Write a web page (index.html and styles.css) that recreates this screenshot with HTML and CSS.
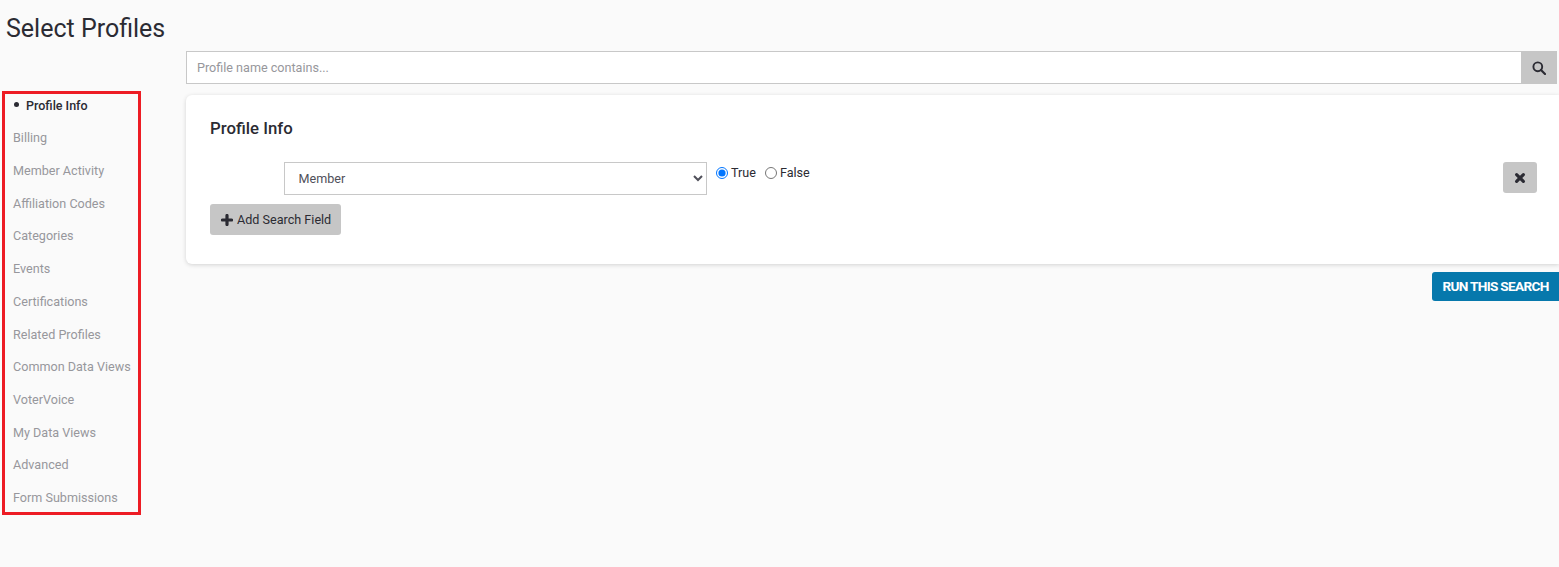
FILE: index.html
```html
<!DOCTYPE html>
<html lang="en">
<head>
<meta charset="utf-8">
<title>Select Profiles</title>
<link rel="stylesheet" href="styles.css">
</head>
<body>
<h1 class="page-title">Select Profiles</h1>
<div class="layout">
  <aside class="sidebar">
    <ul class="side-nav">
      <li class="active">Profile Info</li>
      <li>Billing</li>
      <li>Member Activity</li>
      <li>Affiliation Codes</li>
      <li>Categories</li>
      <li>Events</li>
      <li>Certifications</li>
      <li>Related Profiles</li>
      <li>Common Data Views</li>
      <li>VoterVoice</li>
      <li>My Data Views</li>
      <li>Advanced</li>
      <li>Form Submissions</li>
    </ul>
  </aside>
  <main class="main">
    <div class="search-row">
      <input class="search-input" type="text" placeholder="Profile name contains...">
      <button class="search-btn" type="button" aria-label="Search">
        <svg width="14" height="14" viewBox="0 0 14 14"><circle cx="5.8" cy="5.8" r="4.4" fill="none" stroke="#2b2b33" stroke-width="1.9"/><path d="M9 9l4 4" stroke="#2b2b33" stroke-width="2.2" stroke-linecap="round"/></svg>
      </button>
    </div>
    <section class="card">
      <h2 class="card-title">Profile Info</h2>
      <div class="field-row">
        <select class="field-select"><option>Member</option></select>
        <label class="radio"><input type="radio" name="member" checked>True</label>
        <label class="radio"><input type="radio" name="member">False</label>
        <button class="remove-btn" type="button" aria-label="Remove">
          <svg width="12" height="12" viewBox="0 0 12 12"><path d="M2.6 2.6l6.8 6.8M9.4 2.6l-6.8 6.8" stroke="#2b2b33" stroke-width="3.2" stroke-linecap="round"/></svg>
        </button>
      </div>
      <button class="add-btn" type="button">
        <svg width="12" height="12" viewBox="0 0 12 12"><path d="M6 1.5v9M1.5 6h9" stroke="#2b2b33" stroke-width="3.2" stroke-linecap="round"/></svg>
        Add Search Field
      </button>
    </section>
    <div class="actions"><button class="run-btn" type="button">RUN THIS SEARCH</button></div>
  </main>
</div>
</body>
</html>
```
FILE: styles.css
```css
* { box-sizing: border-box; }
html, body { margin: 0; padding: 0; }
body {
  height: 567px;
  overflow: hidden;
  background: #fafafa;
  font-family: Roboto, "Liberation Sans", sans-serif;
  color: #2b2b33;
}
.page-title {
  margin: 0;
  height: 51px;
  padding: 14px 0 0 6px;
  font-size: 25px;
  line-height: 30px;
  font-weight: 400;
}
.layout { display: flex; align-items: flex-start; }
.sidebar { width: 186px; flex: none; padding: 40px 0 0 2px; }
.side-nav {
  list-style: none;
  margin: 0;
  width: 139px;
  height: 424px;
  padding: 1.7px 0 0 8px;
  border: 3px solid #ed1c24;
  display: flex;
  flex-direction: column;
  gap: 13.03px;
  font-size: 12.6px;
  line-height: 19.67px;
  color: #97979c;
}
.side-nav .active {
  position: relative;
  padding-left: 13px;
  font-weight: 500;
  font-size: 12.5px;
  color: #2b2b33;
}
.side-nav .active::before {
  content: "";
  position: absolute;
  left: 1px;
  top: 6px;
  width: 5px;
  height: 5px;
  border-radius: 50%;
  background: #2b2b33;
}
.main { flex: 1; min-width: 0; }
.search-row { display: flex; height: 33px; padding-right: 2px; }
.search-input {
  flex: 1;
  min-width: 0;
  height: 33px;
  padding: 0 10px;
  border: 1px solid #c8c8c8;
  border-right: 0;
  background: #fff;
  font: 12.6px Roboto, sans-serif;
  color: #2b2b33;
}
.search-input::placeholder { color: #97979c; opacity: 1; }
.search-btn {
  width: 36px;
  height: 33px;
  padding: 0;
  border: 0;
  background: #c6c6c6;
  display: flex;
  align-items: center;
  justify-content: center;
}
.card {
  position: relative;
  height: 169px;
  margin-top: 11px;
  padding: 22px 22px 0 24px;
  background: #fff;
  border-radius: 6px 0 0 6px;
  box-shadow: 0 1px 4px rgba(0, 0, 0, 0.16);
}
.card-title {
  margin: 0 0 23px;
  font-size: 16.8px;
  line-height: 22px;
  font-weight: 500;
}
.field-row { display: flex; align-items: flex-start; height: 33px; padding-left: 74px; }
.field-select {
  width: 423px;
  height: 33px;
  padding: 0 9.5px;
  border: 1px solid #c8c8c8;
  border-radius: 0;
  background: #fff;
  font: 12.6px Roboto, sans-serif;
  color: #50505a;
}
.radio {
  display: flex;
  align-items: center;
  height: 20px;
  margin-top: 1px;
  margin-left: 9px;
  font-size: 12.6px;
  line-height: 20px;
  color: #2b2b33;
}
.radio + .radio { margin-left: 9px; }
.radio input { width: 12px; height: 12px; margin: 0 3px 0 0; }
.remove-btn {
  width: 34px;
  height: 31px;
  margin-left: auto;
  padding: 0;
  border: 0;
  border-radius: 3px;
  background: #c6c6c6;
  display: flex;
  align-items: center;
  justify-content: center;
}
.add-btn {
  display: flex;
  align-items: center;
  gap: 4px;
  width: 131px;
  height: 31px;
  margin-top: 9px;
  padding: 0 0 0 11px;
  border: 0;
  border-radius: 3px;
  background: #c6c6c6;
  font: 12.6px Roboto, sans-serif;
  color: #2b2b33;
}
.actions { display: flex; justify-content: flex-end; margin-top: 8px; }
.run-btn {
  width: 127px;
  height: 29px;
  padding: 0 0 2px;
  border: 0;
  border-radius: 3px 0 0 3px;
  background: #0678ac;
  color: #fff;
  font: 700 13.6px Roboto, sans-serif;
  letter-spacing: -0.68px;
}
```
